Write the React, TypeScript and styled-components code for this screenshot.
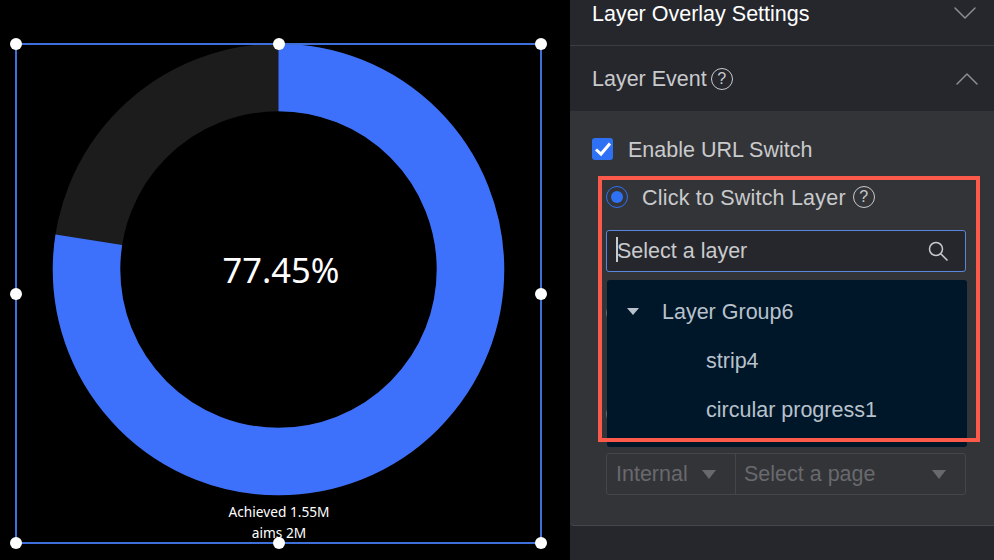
import React from "react";
import styled, { createGlobalStyle } from "styled-components";
import { ChevronDown, ChevronUp } from "lucide-react";

const GlobalStyle = createGlobalStyle`
  html, body {
    margin: 0;
    padding: 0;
    width: 994px;
    height: 560px;
    overflow: hidden;
    background: #000;
  }
`;

const Page = styled.div`
  display: flex;
  width: 994px;
  height: 560px;
  overflow: hidden;
`;

const Canvas = styled.div`
  position: relative;
  width: 570px;
  height: 560px;
  flex: none;
  background: #000;
  font-family: "Noto Sans", "Open Sans", sans-serif;
`;

const Gauge = styled.svg`
  position: absolute;
  left: 0;
  top: 0;
`;

const GaugeValue = styled.div`
  position: absolute;
  left: 181px;
  top: 245px;
  width: 200px;
  text-align: center;
  color: #fff;
  font-size: 34.5px;
  line-height: 50px;
`;

const GaugeCaption = styled.div<{ $top: number }>`
  position: absolute;
  left: 179px;
  top: ${(p) => p.$top}px;
  width: 200px;
  text-align: center;
  color: #fff;
  font-size: 13.7px;
  line-height: 18px;
`;

const Frame = styled.div`
  position: absolute;
  left: 15px;
  top: 43px;
  width: 527px;
  height: 501px;
  box-sizing: border-box;
  border: 2px solid #3f6fd8;
`;

const Handle = styled.span<{ $x: number; $y: number }>`
  position: absolute;
  left: ${(p) => p.$x}px;
  top: ${(p) => p.$y}px;
  width: 12px;
  height: 12px;
  margin: -6px 0 0 -6px;
  border-radius: 50%;
  background: #fff;
`;

const Panel = styled.div`
  flex: 1;
  min-width: 0;
  margin-top: -19px;
  background: #25272d;
  font-family: "Liberation Sans", Arial, sans-serif;
  font-size: 21.5px;
  color: #c9cacc;
`;

const Label = styled.span`
  padding-top: 2px;
`;

const SectionHead = styled.div<{ $last?: boolean }>`
  display: flex;
  align-items: center;
  height: ${(p) => (p.$last ? 65 : 64)}px;
  padding: 0 ${(p) => (p.$last ? 7 : 9)}px 0 22px;
  border-bottom: ${(p) => (p.$last ? "none" : "1px solid #3b3d43")};
`;

const SectionTitle = styled.div<{ $bright?: boolean }>`
  flex: 1;
  display: flex;
  align-items: center;
  gap: 4px;
  color: ${(p) => (p.$bright ? "#fff" : "#c9cacc")};
`;

const HelpIcon = styled.span`
  display: inline-flex;
  align-items: center;
  justify-content: center;
  width: 22px;
  height: 22px;
  box-sizing: border-box;
  border: 1.5px solid #c9cacc;
  border-radius: 50%;
  font-size: 16px;
  line-height: 1;
`;

const Body = styled.div`
  position: relative;
  height: 415px;
  padding: 26px 28px 0 22px;
  box-sizing: border-box;
  background: #333438;
  border-bottom: 1px solid #44464b;
  border-bottom-left-radius: 4px;
`;

const CheckRow = styled.label`
  display: flex;
  align-items: center;
  gap: 15px;
  height: 24px;
`;

const CheckBox = styled.span`
  display: flex;
  align-items: center;
  justify-content: center;
  width: 21px;
  height: 22px;
  border-radius: 3px;
  background: #2f71f5;
`;

const Nested = styled.div`
  margin: 24px 0 0 14px;
`;

const RadioRow = styled.label`
  display: flex;
  align-items: center;
  height: 24px;
`;

const RadioOuter = styled.span<{ $off?: boolean; $gap?: number }>`
  display: flex;
  align-items: center;
  justify-content: center;
  flex: none;
  width: 22px;
  height: 22px;
  margin-top: ${(p) => p.$gap ?? 0}px;
  margin-right: 14px;
  box-sizing: border-box;
  border: 1.5px solid ${(p) => (p.$off ? "#6b6d72" : "#2f71f5")};
  border-radius: 50%;
`;

const RadioDot = styled.span`
  width: 12px;
  height: 12px;
  border-radius: 50%;
  background: #2f71f5;
`;

const RadioLabel = styled.span`
  display: flex;
  align-items: center;
  gap: 7px;
  letter-spacing: 0.2px;
`;

const SearchBox = styled.div`
  display: flex;
  align-items: center;
  height: 42px;
  margin-top: 21px;
  padding: 0 16px 0 9px;
  box-sizing: border-box;
  background: #25272d;
  border: 1px solid #5b86dd;
  border-radius: 3px;
`;

const TextCursor = styled.span`
  width: 2px;
  height: 25px;
  margin: -3px -1px 0 0;
  background: #c9cacc;
`;

const SearchLabel = styled.span`
  flex: 1;
`;

const PageRow = styled.div`
  display: flex;
  height: 42px;
  margin-top: 28px;
  box-sizing: border-box;
  border: 1px solid #44464b;
  border-radius: 3px;
  color: #68696d;
`;

const PageCell = styled.div<{ $wide?: boolean }>`
  display: flex;
  align-items: center;
  justify-content: space-between;
  box-sizing: border-box;
  width: ${(p) => (p.$wide ? "auto" : "129px")};
  flex: ${(p) => (p.$wide ? 1 : "none")};
  padding: ${(p) => (p.$wide ? "0 19px 0 8px" : "0 19px 0 9px")};
  border-right: ${(p) => (p.$wide ? "none" : "1px solid #44464b")};
`;

const Caret = styled.span<{ $color: string; $size?: number }>`
  width: 0;
  height: 0;
  border-left: ${(p) => p.$size ?? 7.5}px solid transparent;
  border-right: ${(p) => p.$size ?? 7.5}px solid transparent;
  border-top: ${(p) => (p.$size ?? 7.5) * 1.2}px solid ${(p) => p.$color};
`;

const Dropdown = styled.div`
  position: absolute;
  left: 37px;
  top: 169px;
  width: 360px;
  height: 167px;
  padding-top: 7px;
  box-sizing: border-box;
  background: #001629;
  border-radius: 3px;
  color: #b8c2cc;
`;

const TreeRow = styled.div<{ $indent: number }>`
  display: flex;
  align-items: center;
  height: 49px;
  padding-left: ${(p) => p.$indent}px;
`;

const TreeLabel = styled(Label)`
  margin-left: 23px;
`;

const Highlight = styled.div`
  position: absolute;
  left: 28px;
  top: 65px;
  width: 382px;
  height: 266px;
  box-sizing: border-box;
  border: 4px solid #fb5a4b;
  pointer-events: none;
`;

const handles: [number, number][] = [
  [15.5, 44], [278.5, 44], [541, 44],
  [15.5, 293.5], [541, 293.5],
  [15.5, 543], [278.5, 543], [541, 543],
];

// 77.45% of the ring, clockwise from twelve o'clock
const ringLength = 2 * Math.PI * 192;

export default function App() {
  return (
    <>
      <GlobalStyle />
      <Page>
        <Canvas>
          <Gauge width="570" height="560" viewBox="0 0 570 560">
            <circle cx="278.5" cy="269.5" r="192" fill="none" stroke="#1c1c1c" strokeWidth="67.5" />
            <circle
              cx="278.5"
              cy="269.5"
              r="192"
              fill="none"
              stroke="#3e71fb"
              strokeWidth="67.5"
              strokeDasharray={`${ringLength * 0.7745} ${ringLength}`}
              transform="rotate(-90 278.5 269.5)"
            />
          </Gauge>
          <GaugeValue>77.45%</GaugeValue>
          <GaugeCaption $top={503}>Achieved 1.55M</GaugeCaption>
          <GaugeCaption $top={524}>aims 2M</GaugeCaption>
          <Frame />
          {handles.map(([x, y]) => (
            <Handle key={`${x}-${y}`} $x={x} $y={y} />
          ))}
        </Canvas>
        <Panel>
          <SectionHead>
            <SectionTitle $bright>
              <Label>Layer Overlay Settings</Label>
            </SectionTitle>
            <ChevronDown size={40} strokeWidth={0.9} color="#8b8d91" />
          </SectionHead>
          <SectionHead $last>
            <SectionTitle>
              <Label>Layer Event</Label> <HelpIcon>?</HelpIcon>
            </SectionTitle>
            <ChevronUp size={40} strokeWidth={0.9} color="#8b8d91" />
          </SectionHead>
          <Body>
            <CheckRow>
              <CheckBox>
                <svg width="18" height="16" viewBox="0 0 18 16">
                  <path d="M2 8.5 L7 13 L16 2.5" fill="none" stroke="#fff" strokeWidth="3" />
                </svg>
              </CheckBox>
              <Label>Enable URL Switch</Label>
            </CheckRow>
            <Nested>
              <RadioRow>
                <RadioOuter>
                  <RadioDot />
                </RadioOuter>
                <RadioLabel>
                  <Label>Click to Switch Layer</Label> <HelpIcon>?</HelpIcon>
                </RadioLabel>
              </RadioRow>
              <SearchBox>
                <TextCursor />
                <SearchLabel>Select a layer</SearchLabel>
                <svg width="22" height="22" viewBox="0 0 22 22" fill="none" stroke="#c9cacc" strokeWidth="1.5">
                  <circle cx="9" cy="9" r="6.5" />
                  <path d="M14 14 L20.5 20.5" />
                </svg>
              </SearchBox>
              {/* these two sit behind the open dropdown, only their left edge shows */}
              <RadioOuter $off $gap={30} />
              <RadioOuter $off $gap={79} />
              <PageRow>
                <PageCell>
                  Internal
                  <Caret $color="#68696d" />
                </PageCell>
                <PageCell $wide>
                  Select a page
                  <Caret $color="#68696d" />
                </PageCell>
              </PageRow>
            </Nested>
            <Dropdown>
              <TreeRow $indent={20}>
                <Caret $color="#b8c2cc" $size={6.5} />
                <TreeLabel>Layer Group6</TreeLabel>
              </TreeRow>
              <TreeRow $indent={99}>
                <Label>strip4</Label>
              </TreeRow>
              <TreeRow $indent={99}>
                <Label>circular progress1</Label>
              </TreeRow>
            </Dropdown>
            <Highlight />
          </Body>
        </Panel>
      </Page>
    </>
  );
}
